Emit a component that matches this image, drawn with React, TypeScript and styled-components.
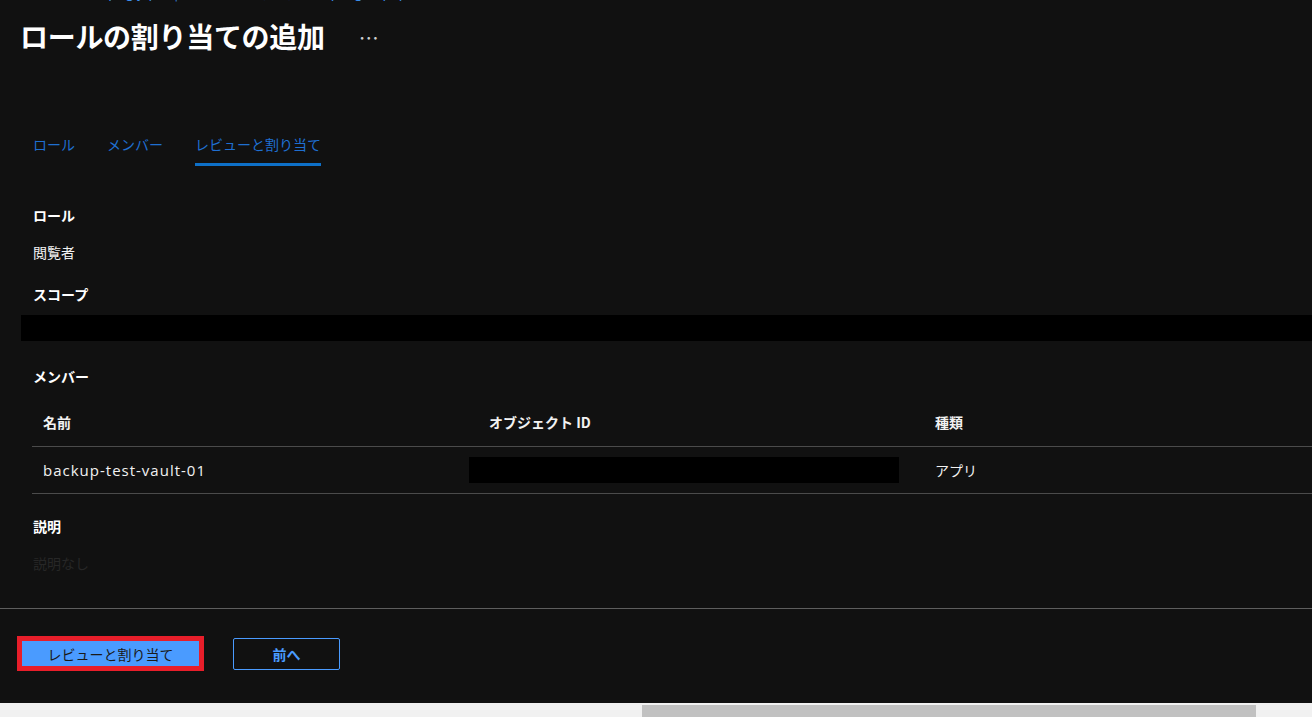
import React from "react";
import styled, { createGlobalStyle } from "styled-components";

const Global = createGlobalStyle`
  html, body { margin: 0; padding: 0; background: #111111; }
  body { font-family: "Segoe UI", "Open Sans", "Noto Sans CJK JP", sans-serif; }
  * { box-sizing: border-box; }
`;

const JP = `"Noto Sans CJK JP", "Noto Sans", sans-serif`;
const LATIN = `"Open Sans", "Noto Sans CJK JP", sans-serif`;

const Page = styled.div`
  width: 1312px;
  height: 717px;
  display: flex;
  flex-direction: column;
  overflow: hidden;
  background: #111111;
  color: #ffffff;
  font-family: ${JP};
`;

const Main = styled.div`
  flex: 1;
  display: flex;
  flex-direction: column;
  min-height: 0;
`;

const Breadcrumb = styled.div`
  height: 4px;
  overflow: hidden;
  padding-left: 20px;
`;

const BreadcrumbText = styled.div`
  margin-top: -17px;
  font-size: 13px;
  line-height: 20px;
  color: #3b8eea;
  white-space: nowrap;
`;

const TitleRow = styled.div`
  display: flex;
  align-items: center;
  padding-left: 20px;
  margin-top: 12px;
  height: 40px;
`;

const Title = styled.h1`
  margin: 0;
  font-family: ${JP};
  font-size: 28px;
  font-weight: 700;
  line-height: 40px;
  color: #ffffff;
  letter-spacing: -0.3px;
`;

const More = styled.span`
  margin-left: 34px;
  font-size: 20px;
  line-height: 20px;
  color: #cfcfcf;
  margin-top: 4px;
`;

const Tabs = styled.nav`
  display: flex;
  gap: 32px;
  padding-left: 33px;
  margin-top: 78px;
`;

const Tab = styled.div<{ $active?: boolean }>`
  font-size: 14px;
  line-height: 20px;
  color: #1f6fd1;
  padding-bottom: 9px;
  border-bottom: 3px solid ${(p) => (p.$active ? "#0e70c8" : "transparent")};
  white-space: nowrap;
`;

const Content = styled.div`
  padding-left: 21px;
  display: flex;
  flex-direction: column;
  margin-top: 39px;
`;

const Label = styled.div<{ $gap?: number }>`
  padding-left: 12px;
  font-size: 14px;
  line-height: 20px;
  font-weight: 700;
  color: #ffffff;
  margin-top: ${(p) => p.$gap ?? 0}px;
`;

const Value = styled.div<{ $dim?: boolean }>`
  padding-left: 12px;
  margin-top: 17px;
  font-size: 14px;
  line-height: 20px;
  color: ${(p) => (p.$dim ? "#272727" : "#f2f2f2")};
`;

const Redacted = styled.div<{ $w?: string; $offset?: number }>`
  background: #000000;
  height: 26px;
  width: ${(p) => p.$w ?? "auto"};
  margin-left: ${(p) => p.$offset ?? 0}px;
`;

const ScopeBar = styled(Redacted)`
  margin-top: 11px;
`;

const Table = styled.div`
  margin-left: 11px;
  margin-top: 12px;
  display: flex;
  flex-direction: column;
`;

const Row = styled.div<{ $head?: boolean }>`
  display: grid;
  grid-template-columns: 446px 446px 1fr;
  align-items: center;
  height: ${(p) => (p.$head ? 49 : 47)}px;
  border-bottom: 1px solid #4b4b4b;
`;

const Cell = styled.div<{ $head?: boolean; $latin?: boolean }>`
  padding-left: 11px;
  font-family: ${(p) => (p.$latin ? LATIN : JP)};
  font-size: ${(p) => (p.$latin ? 15 : 14)}px;
  letter-spacing: ${(p) => (p.$latin ? "1px" : "normal")};
  line-height: 20px;
  font-weight: ${(p) => (p.$head ? 700 : 400)};
  color: #f2f2f2;
  white-space: nowrap;
`;

const Divider = styled.div`
  margin-top: 35px;
  height: 1px;
  background: #5e5e5e;
`;

const Footer = styled.div`
  display: flex;
  align-items: center;
  gap: 29px;
  padding-left: 17px;
  margin-top: 27px;
`;

const Annotated = styled.div`
  border: 5px solid #e81e2a;
  display: flex;
`;

const PrimaryButton = styled.button`
  width: 177px;
  height: 25px;
  border: none;
  padding: 0;
  background: #4a9bff;
  color: #1a1a1a;
  font-family: ${JP};
  font-size: 14px;
  line-height: 20px;
  cursor: pointer;
`;

const SecondaryButton = styled.button`
  width: 107px;
  height: 32px;
  border: 1px solid #4a9bff;
  border-radius: 2px;
  background: transparent;
  color: #4a9bff;
  font-family: ${JP};
  font-size: 14px;
  font-weight: 700;
  line-height: 20px;
  padding: 0;
  cursor: pointer;
`;

const ScrollTrack = styled.div`
  height: 14px;
  background: #f1f1f1;
  padding-top: 2px;
  display: flex;
`;

const ScrollThumb = styled.div`
  margin-left: 642px;
  width: 614px;
  height: 12px;
  background: #c1c1c1;
`;

export default function App() {
  return (
    <Page>
      <Global />
      <Main>
        <Breadcrumb>
          <BreadcrumbText>ホーム &gt; backup-rg-japan | アクセス制御 (IAM) &gt; sample-group-ip</BreadcrumbText>
        </Breadcrumb>
        <TitleRow>
          <Title>ロールの割り当ての追加</Title>
          <More>…</More>
        </TitleRow>
        <Tabs>
          <Tab>ロール</Tab>
          <Tab>メンバー</Tab>
          <Tab $active>レビューと割り当て</Tab>
        </Tabs>
        <Content>
          <Label>ロール</Label>
          <Value>閲覧者</Value>
          <Label $gap={22}>スコープ</Label>
          <ScopeBar />
          <Label $gap={25}>メンバー</Label>
          <Table>
            <Row $head>
              <Cell $head>名前</Cell>
              <Cell $head>オブジェクト ID</Cell>
              <Cell $head>種類</Cell>
            </Row>
            <Row>
              <Cell $latin>backup-test-vault-01</Cell>
              <Cell>
                <Redacted $w="430px" $offset={-20} />
              </Cell>
              <Cell>アプリ</Cell>
            </Row>
          </Table>
          <Label $gap={22}>説明</Label>
          <Value $dim>説明なし</Value>
        </Content>
        <Divider />
        <Footer>
          <Annotated>
            <PrimaryButton>レビューと割り当て</PrimaryButton>
          </Annotated>
          <SecondaryButton>前へ</SecondaryButton>
        </Footer>
      </Main>
      <ScrollTrack>
        <ScrollThumb />
      </ScrollTrack>
    </Page>
  );
}
